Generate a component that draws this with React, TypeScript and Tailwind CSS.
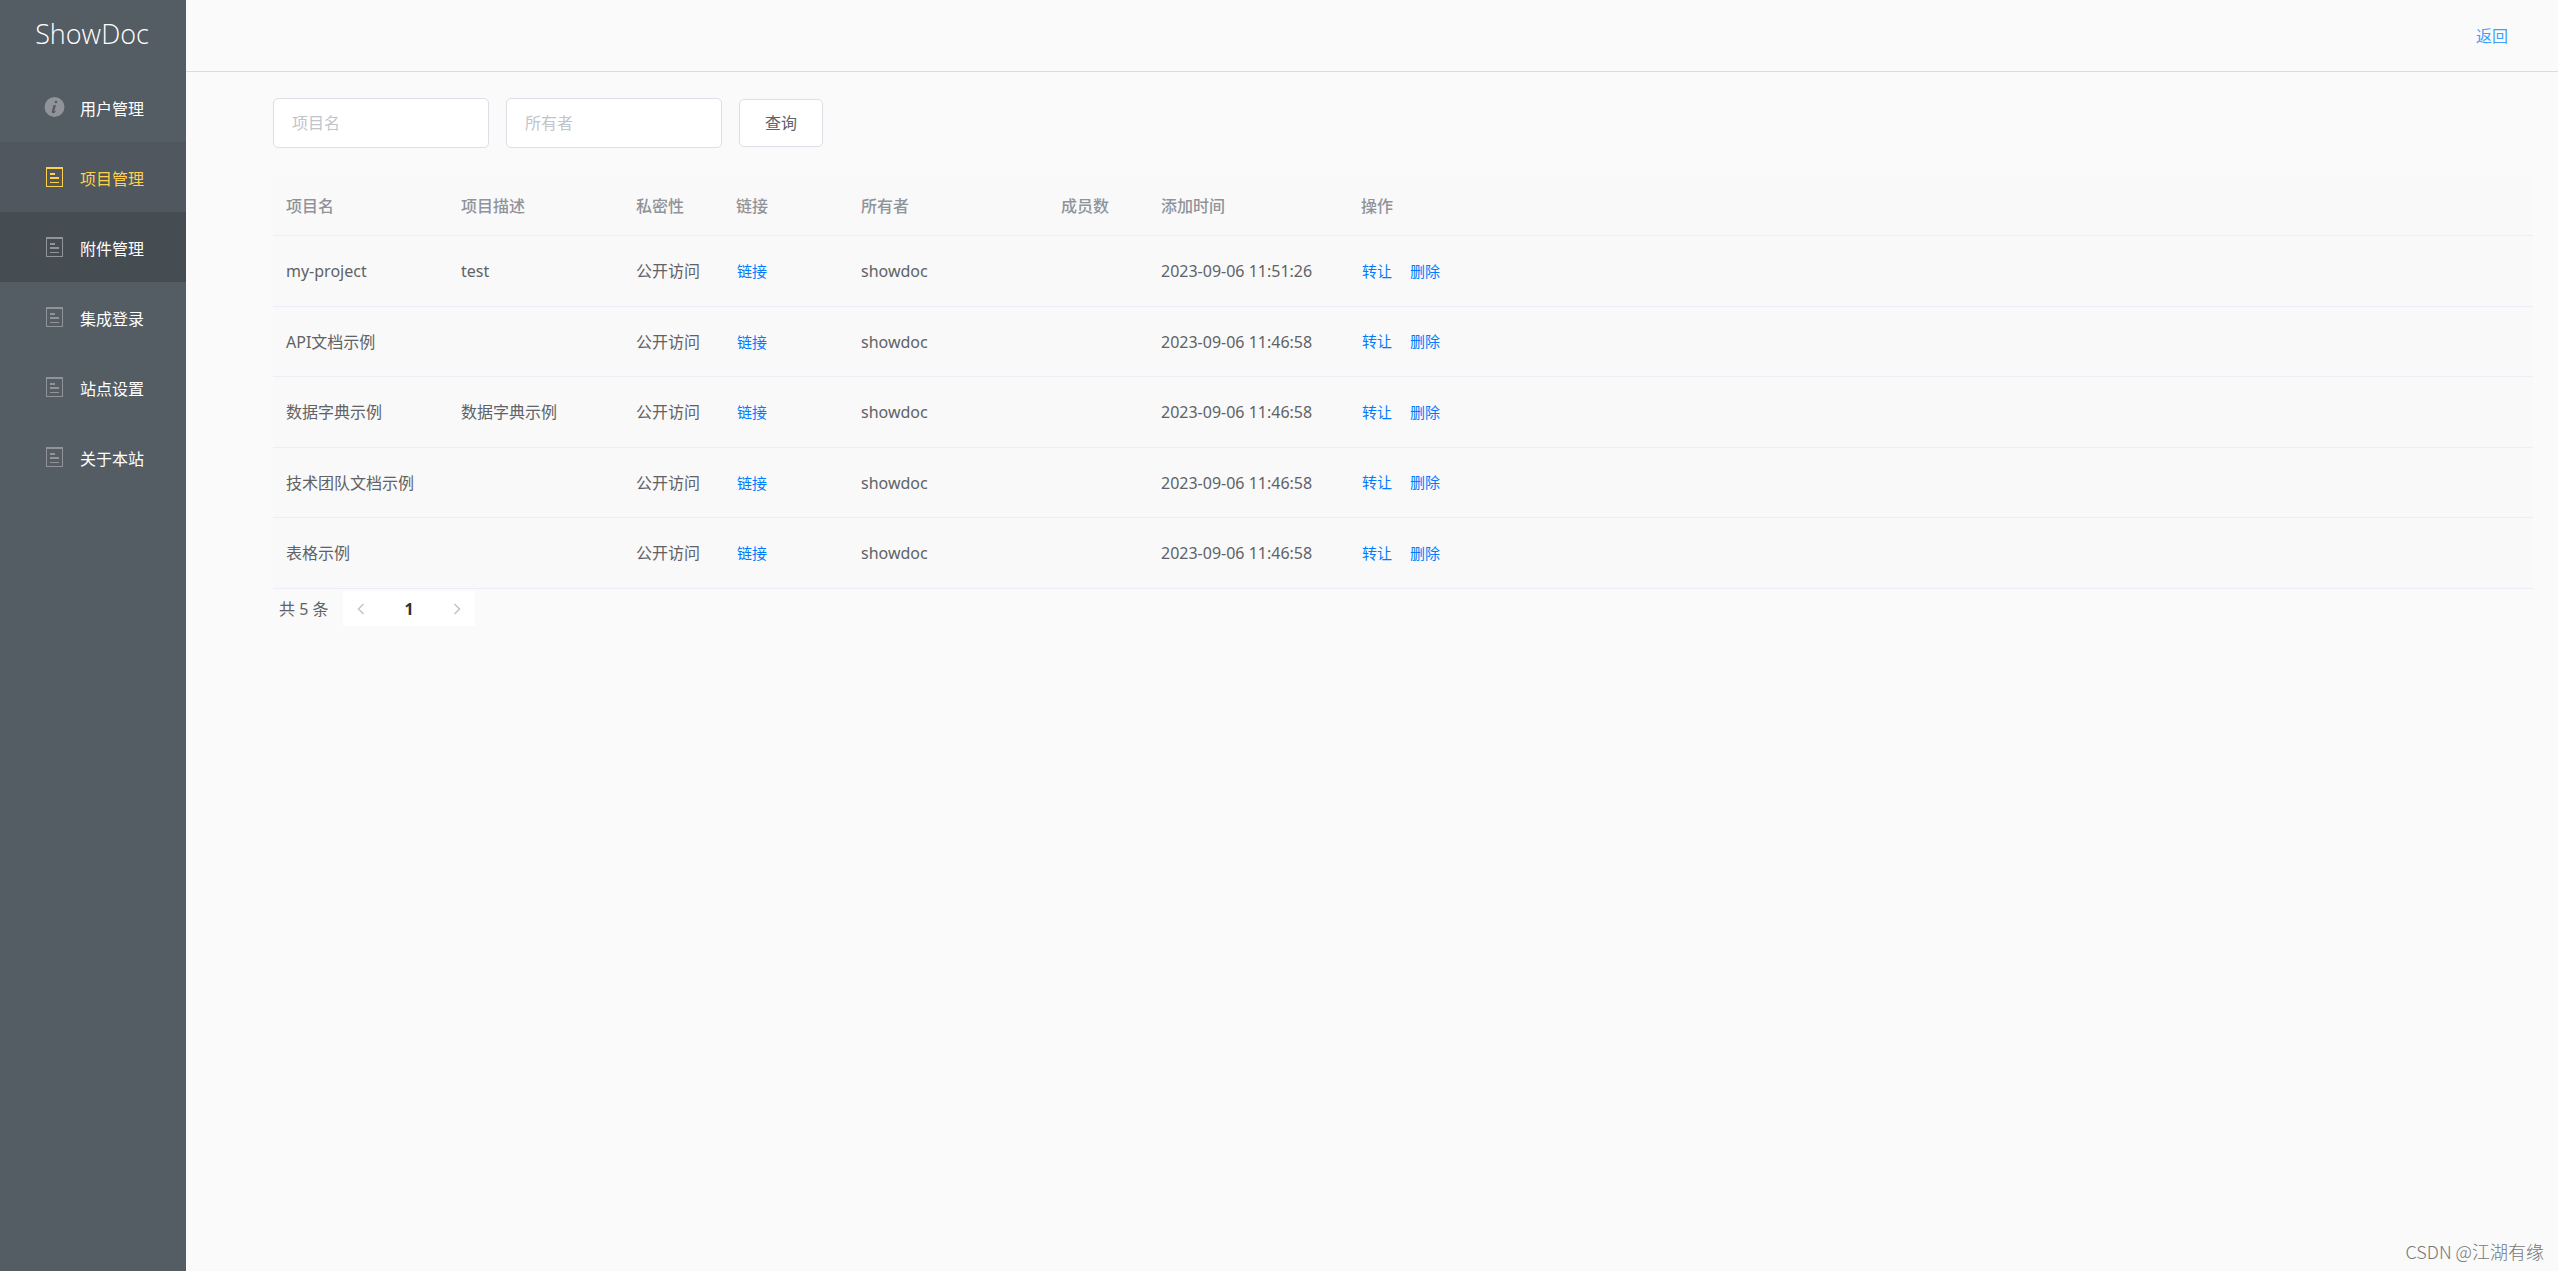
import React from 'react';

type MenuEntry = {
  label: string;
  icon: 'info' | 'ticket';
  itemClass: string;
  iconClass: string;
};

type Project = {
  name: string;
  description: string;
  owner: string;
  createdAt: string;
};

const menu: MenuEntry[] = [
  { label: '用户管理', icon: 'info', itemClass: 'text-white', iconClass: 'text-[#909399]' },
  { label: '项目管理', icon: 'ticket', itemClass: 'bg-[#50575e] text-[#ffd04b]', iconClass: 'text-[#ffd04b]' },
  { label: '附件管理', icon: 'ticket', itemClass: 'bg-[#454c52] text-white', iconClass: 'text-[#909399]' },
  { label: '集成登录', icon: 'ticket', itemClass: 'text-white', iconClass: 'text-[#909399]' },
  { label: '站点设置', icon: 'ticket', itemClass: 'text-white', iconClass: 'text-[#909399]' },
  { label: '关于本站', icon: 'ticket', itemClass: 'text-white', iconClass: 'text-[#909399]' },
];

const columns = [
  { title: '项目名', width: 'w-[175px]' },
  { title: '项目描述', width: 'w-[175px]' },
  { title: '私密性', width: 'w-[100px]' },
  { title: '链接', width: 'w-[125px]' },
  { title: '所有者', width: 'w-[200px]' },
  { title: '成员数', width: 'w-[100px]' },
  { title: '添加时间', width: 'w-[200px]' },
  { title: '操作', width: '' },
];

const projects: Project[] = [
  { name: 'my-project', description: 'test', owner: 'showdoc', createdAt: '2023-09-06 11:51:26' },
  { name: 'API文档示例', description: '', owner: 'showdoc', createdAt: '2023-09-06 11:46:58' },
  { name: '数据字典示例', description: '数据字典示例', owner: 'showdoc', createdAt: '2023-09-06 11:46:58' },
  { name: '技术团队文档示例', description: '', owner: 'showdoc', createdAt: '2023-09-06 11:46:58' },
  { name: '表格示例', description: '', owner: 'showdoc', createdAt: '2023-09-06 11:46:58' },
];

function InfoIcon() {
  return (
    <svg width="21" height="20" viewBox="0 0 21 20" aria-hidden="true">
      <circle cx="10.5" cy="10" r="10" fill="currentColor" />
      <circle cx="12" cy="5" r="1.3" fill="#545c64" />
      <path d="M8.8 8.6 12 8l-1.7 6.6 1.8-.9c-.8 1.7-1.8 2.6-3 2.6-1.1 0-1.5-.8-1.2-2l1.2-4.9z" fill="#545c64" />
    </svg>
  );
}

function TicketIcon() {
  return (
    <svg width="17" height="20" viewBox="0 0 17 20" fill="currentColor" shapeRendering="crispEdges" aria-hidden="true">
      <path d="M0 0h17v20H0zM1 2v17h15V2z" fillRule="evenodd" />
      <path d="M4 6h5v2H4zM4 10h9v2H4zM4 15h9v1H4z" />
    </svg>
  );
}

function Sidebar() {
  return (
    <aside className="w-[186px] shrink-0 bg-[#545c64]">
      <h1 className="flex h-[72px] items-center justify-center pr-0.5 pb-1 font-['Open_Sans','Noto_Sans',sans-serif] text-[27px] font-light text-white">
        ShowDoc
      </h1>
      <nav>
        {menu.map((item) => (
          <a key={item.label} href="#" className={`flex h-[70px] items-center pl-11 ${item.itemClass}`}>
            <span className={`flex w-[21px] justify-center ${item.iconClass}`}>
              {item.icon === 'info' ? <InfoIcon /> : <TicketIcon />}
            </span>
            <span className="ml-[15px] pt-1">{item.label}</span>
          </a>
        ))}
      </nav>
    </aside>
  );
}

function SearchForm() {
  return (
    <form className="flex items-center gap-[17px]" onSubmit={(e) => e.preventDefault()}>
      <input
        type="text"
        aria-label="项目名"
        placeholder="项目名"
        className="h-[50px] w-[216px] rounded-[5px] border border-[#dcdfe6] bg-white px-[18px] outline-none placeholder:text-[#c0c4cc]"
      />
      <input
        type="text"
        aria-label="所有者"
        placeholder="所有者"
        className="h-[50px] w-[216px] rounded-[5px] border border-[#dcdfe6] bg-white px-[18px] outline-none placeholder:text-[#c0c4cc]"
      />
      <button type="submit" className="h-12 w-[84px] rounded-[5px] border border-[#dcdfe6] bg-white text-[#606266]">
        查询
      </button>
    </form>
  );
}

function ProjectTable() {
  return (
    <table className="mt-7 w-full table-fixed border-separate border-spacing-0 bg-[#f9f9f9] text-left text-[#606266]">
      <thead>
        <tr className="h-[60px] text-[#909399]">
          {columns.map((col) => (
            <th key={col.title} className={`border-b border-[#ebeef5] px-[13px] font-medium ${col.width}`}>
              {col.title}
            </th>
          ))}
        </tr>
      </thead>
      <tbody>
        {projects.map((project) => (
          <tr key={project.name} className="odd:h-[71px] even:h-[70px] *:border-b *:border-[#ebeef5] *:px-[13px]">
            <td>{project.name}</td>
            <td>{project.description}</td>
            <td>公开访问</td>
            <td>
              <a href="#" className="px-px text-[15px] text-[#007bff]">链接</a>
            </td>
            <td>{project.owner}</td>
            <td></td>
            <td>{project.createdAt}</td>
            <td>
              <div className="flex gap-4 text-[15px] text-[#007bff]">
                <button type="button" className="px-px">转让</button>
                <button type="button" className="px-px">删除</button>
              </div>
            </td>
          </tr>
        ))}
      </tbody>
    </table>
  );
}

function Arrow({ d }: { d: string }) {
  return (
    <svg width="8" height="12" viewBox="0 0 8 12" fill="none" stroke="#c0c4cc" strokeWidth="1.5" aria-hidden="true">
      <path d={d} />
    </svg>
  );
}

function Pagination() {
  return (
    <div className="mt-0.5 flex h-[35px] items-center pl-1.5 text-[#606266]">
      <span className="w-16">共 5 条</span>
      <div className="flex h-full bg-white">
        <button type="button" aria-label="上一页" disabled className="flex w-9 items-center justify-center">
          <Arrow d="M6.5 1 1.5 6l5 5" />
        </button>
        <button type="button" className="w-[60px] font-bold text-[#303133]">1</button>
        <button type="button" aria-label="下一页" disabled className="flex w-9 items-center justify-center">
          <Arrow d="M1.5 1l5 5-5 5" />
        </button>
      </div>
    </div>
  );
}

export default function App() {
  return (
    <div className="flex min-h-screen bg-[#fafafa] font-['Noto_Sans','Noto_Sans_CJK_SC',sans-serif] text-base">
      <Sidebar />
      <div className="flex flex-1 flex-col">
        <header className="flex h-[72px] items-center justify-end border-b border-[#dcdcdc] pr-[50px]">
          <a href="#" className="text-[#409eff]">返回</a>
        </header>
        <main className="flex-1 pt-[26px] pr-[25px] pl-[87px]">
          <SearchForm />
          <ProjectTable />
          <Pagination />
        </main>
        <footer className="flex justify-end pr-3.5 pb-1.5 font-['Noto_Sans_CJK_SC',sans-serif] text-lg font-light text-[#777777]">
          CSDN @江湖有缘
        </footer>
      </div>
    </div>
  );
}
